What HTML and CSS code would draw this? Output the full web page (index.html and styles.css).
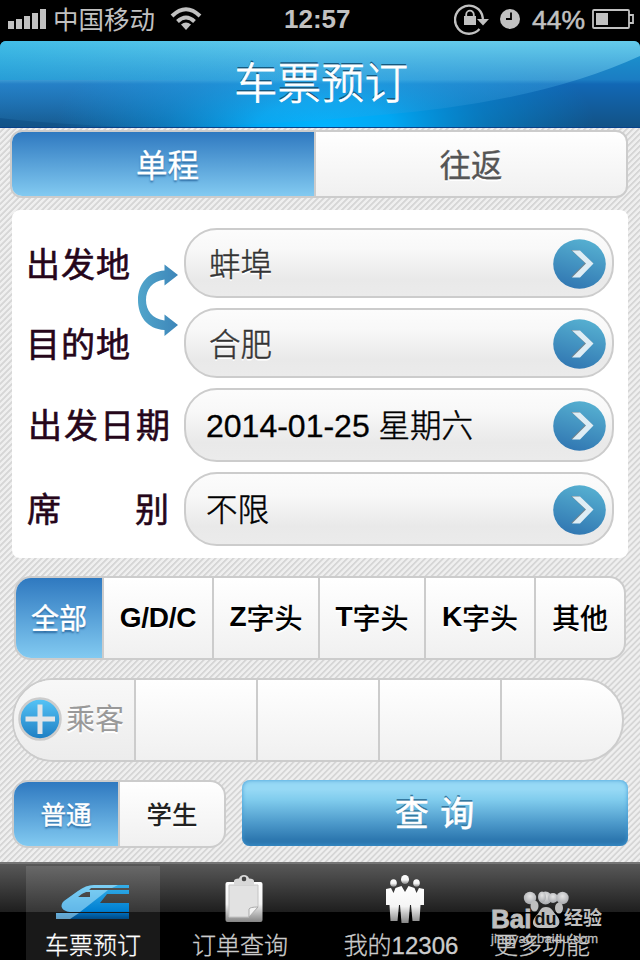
FILE: index.html
```html
<!DOCTYPE html>
<html lang="zh-CN">
<head>
<meta charset="utf-8">
<title>车票预订</title>
<link rel="stylesheet" href="styles.css">
</head>
<body>
<svg class="defs" width="0" height="0" aria-hidden="true">
  <defs>
    <linearGradient id="disc" x1="0.65" y1="0" x2="0.35" y2="1"><stop offset="0" stop-color="#56b0d1"/><stop offset="1" stop-color="#3177b2"/></linearGradient>
    <linearGradient id="swapg" x1="0" y1="0" x2="1" y2="0"><stop offset="0" stop-color="#51a5cb"/><stop offset="1" stop-color="#3d86b9"/></linearGradient>
    <linearGradient id="plusg" x1="0" y1="0" x2="0" y2="1"><stop offset="0" stop-color="#57c5f7"/><stop offset="1" stop-color="#1c7dc2"/></linearGradient>
    <linearGradient id="train" x1="0" y1="0" x2="0" y2="1"><stop offset="0" stop-color="#35aee8"/><stop offset="0.75" stop-color="#0080d2"/><stop offset="0.84" stop-color="#0068b4"/><stop offset="1" stop-color="#004a84"/></linearGradient>
    <linearGradient id="silver" x1="0" y1="0" x2="0" y2="1"><stop offset="0" stop-color="#fff"/><stop offset="0.55" stop-color="#f4f4f4"/><stop offset="1" stop-color="#858585"/></linearGradient>
    <radialGradient id="dot" cx=".5" cy=".35" r=".65"><stop offset="0" stop-color="#e4e4e4"/><stop offset="1" stop-color="#a6a8ac"/></radialGradient>
    <symbol id="go" viewBox="0 0 53 50">
      <ellipse cx="26.5" cy="25" rx="26.3" ry="24.7" fill="url(#disc)"/>
      <path d="M18 11h8l14 13-14 14h-8l14-14z" fill="#70848f"/>
      <path d="M19 11.600h8l13.500 12.900-13.500 14h-8l14-14z" fill="#deedf5"/>
    </symbol>
  </defs>
</svg>
<div class="status">
  <svg class="signal" width="38" height="20" viewBox="0 0 38 20"><path d="M0 12h6v8H0zM8 10h6v10H8zM16 7h6v13h-6zM24 4h6v16h-6zM32 0h6v20h-6z" fill="#c1c1c1"/></svg>
  <span class="carrier">中国移动</span>
  <svg class="wifi" width="32" height="24" viewBox="0 0 32 24"><g fill="none" stroke="#c1c1c1" stroke-width="4"><path d="M2 9Q16-4.500 30 9"/><path d="M7.500 14.500Q16 6.500 24.500 14.500"/></g><path d="M16 23l-5-5.500q5-4 10 0z" fill="#c1c1c1"/></svg>
  <span class="clock">12:57</span>
  <span class="tray">
    <svg class="lock" width="35" height="32" viewBox="0 0 35 32"><path d="M25.500 26A14 14 0 1 1 28 11.500L29 16" fill="none" stroke="#c1c1c1" stroke-width="2.400"/><path d="M23 16h12l-6 6.500z" fill="#c1c1c1"/><path d="M10 13h12v9H10z" fill="#c1c1c1"/><path d="M12.200 14v-2.500a3.800 3.800 0 0 1 7.600 0V14" fill="none" stroke="#c1c1c1" stroke-width="1.800"/></svg>
    <svg class="alarm" width="20" height="20" viewBox="0 0 20 20"><circle cx="10" cy="10" r="10" fill="#c1c1c1"/><path d="M11 3.500V10H6" fill="none" stroke="#000" stroke-width="1.800"/></svg>
    <span class="percent">44%</span>
    <svg class="battery" width="42" height="20" viewBox="0 0 42 20"><rect x="1" y="1" width="36" height="18" rx="1" fill="none" stroke="#c1c1c1" stroke-width="1.800"/><path d="M4 4h12v12H4z" fill="#c1c1c1"/><path d="M37 6h4v8h-4" fill="none" stroke="#c1c1c1" stroke-width="1.800"/></svg>
  </span>
</div>
<header class="header">
  <svg class="shine" width="640" height="86" viewBox="0 0 640 86" preserveAspectRatio="none">
    <defs>
      <linearGradient id="base" x1="0" y1="0" x2="0" y2="1"><stop offset="0" stop-color="#1b9ad2"/><stop offset="0.45" stop-color="#1b7dc3"/><stop offset="0.5" stop-color="#1268b5"/><stop offset="1" stop-color="#125286"/></linearGradient>
      <radialGradient id="glow" gradientUnits="userSpaceOnUse" cx="0" cy="0" r="1" gradientTransform="translate(325 86) scale(270 110)"><stop offset="0" stop-color="#00b4ff"/><stop offset="0.25" stop-color="#00acf8" stop-opacity=".95"/><stop offset="0.6" stop-color="#0096e4" stop-opacity=".5"/><stop offset="1" stop-color="#0090e0" stop-opacity="0"/></radialGradient>
      <linearGradient id="veil" x1="0" y1="0" x2="0" y2="1"><stop offset="0" stop-color="#72d4f0" stop-opacity=".85"/><stop offset="0.45" stop-color="#5fb9e4" stop-opacity=".5"/><stop offset="0.5" stop-color="#3d9fdc" stop-opacity=".45"/><stop offset="1" stop-color="#3d9fdc" stop-opacity=".1"/></linearGradient>
      <linearGradient id="side" x1="0" y1="0" x2="1" y2="0"><stop offset="0" stop-color="#00a3dd" stop-opacity=".35"/><stop offset=".5" stop-color="#00a3dd" stop-opacity="0"/></linearGradient>
    </defs>
    <path d="M0 0h640v86H0z" fill="url(#base)"/>
    <path d="M0 0h640v86H0z" fill="url(#glow)"/>
    <path d="M0 0H640V15Q540 61 380 74Q260 86 140 86Q60 84 0 77z" fill="url(#veil)"/>
    <path d="M0 0h640v39H0z" fill="url(#side)"/>
  </svg>
  <h1 class="title">车票预订</h1>
</header>
<main class="main">
  <div class="seg trip"><div class="on">单程</div><div>往返</div></div>
  <section class="card">
    <svg class="swap" width="42" height="74" viewBox="0 0 42 74"><path d="M27.500 1.500L41 12 27.500 22.500V16.500C15 18 9 27 9 37c0 10 6 19 18.500 20.500V51.500L41 62 27.500 73v-6C10 66 1 53 1 37 1 21 11 8.500 27.500 7.500z" fill="url(#swapg)"/></svg>
    <div class="row"><span class="label">出发地</span><div class="field place"><span>蚌埠</span><svg width="53" height="50"><use href="#go"/></svg></div></div>
    <div class="row"><span class="label">目的地</span><div class="field place"><span>合肥</span><svg width="53" height="50"><use href="#go"/></svg></div></div>
    <div class="row"><span class="label wide">出发日期</span><div class="field tall"><span>2014-01-25 <i>星期六</i></span><svg width="53" height="50"><use href="#go"/></svg></div></div>
    <div class="row"><span class="label split"><span>席</span><span>别</span></span><div class="field tall"><span><i>不限</i></span><svg width="53" height="50"><use href="#go"/></svg></div></div>
  </section>
  <div class="seg kinds"><div class="on">全部</div><div class="latin">G/D/C</div><div><b>Z</b>字头</div><div><b>T</b>字头</div><div><b>K</b>字头</div><div>其他</div></div>
  <div class="seg riders">
    <div class="add"><svg width="44" height="44" viewBox="0 0 44 44"><circle cx="22" cy="22" r="20.500" fill="url(#plusg)" stroke="#ccc" stroke-width="2.500"/><path d="M19.500 7.500h5v12H37v5H24.500V37h-5V24.500H7.500v-5h12z" fill="#e2e5e8"/></svg><span>乘客</span></div>
    <div></div><div></div><div></div><div></div>
  </div>
  <div class="actions">
    <div class="seg fare"><div class="on">普通</div><div>学生</div></div>
    <button class="query">查 询</button>
  </div>
</main>
<nav class="tabs">
  <div class="tab active">
    <svg width="74" height="48" viewBox="0 0 74 48"><path fill-rule="evenodd" d="M0 38h73v6H0zM73 10v3H35l-2 2h40v4H51l-7 9h29v9H14C6 36 3 31 8 26L22 16Q30 10 38 10zM22 22h12v-5h-4q-4 1-8 5z" fill="url(#train)"/><path fill-rule="evenodd" d="M62 10l-6 3H35l-2 2h19l-5 4-14 11-9 7H14C6 36 3 31 8 26L22 16Q30 10 38 10zM22 22h12v-5h-4q-4 1-8 5zM0 38h23l-9 6H0z" fill="#c4efff" opacity=".5"/></svg>
    <span>车票预订</span>
  </div>
  <div class="tab">
    <svg width="38" height="48" viewBox="0 0 38 48"><rect x=".5" y="7" width="37" height="40" rx="2" fill="url(#silver)"/><path d="M4 10h29v22l-9 10H4z" fill="#e2e2e2" stroke="#c4c4c4"/><path d="M33 32l-9 10v-8q1-2 9-2z" fill="#f4f4f4" stroke="#aaa"/><path fill-rule="evenodd" d="M9 10V6q0-2.500 5-2.500Q15 0 19 0t5 3.500q5 0 5 2.500v4zM19 1.800a2.200 2.200 0 1 0 .01 0z" fill="#d8d8d8"/><circle cx="19" cy="4" r="2.200" fill="#444"/></svg>
    <span>订单查询</span>
  </div>
  <div class="tab">
    <svg width="40" height="48" viewBox="0 0 40 48"><g fill="url(#silver)"><ellipse cx="8.500" cy="8" rx="3.300" ry="3.800"/><ellipse cx="31.500" cy="8" rx="3.300" ry="3.800"/><ellipse cx="20" cy="4.500" rx="4" ry="4.500"/></g><path d="M1 14l5-1 2.500 5 2-5 6-2 3.500 6 3.500-6 6 2 2 5 2.500-5 5 1v16h-3.500l-1 16h-7l-1.500-16h-1l-1.500 18h-7L15 30h-1l-1.500 16h-7L4.500 30H1z" fill="url(#silver)"/></svg>
    <span>我的12306</span>
  </div>
  <div class="tab more"><span>更多功能</span></div>
  <div class="mark">
    <svg class="paw" width="46" height="38" viewBox="0 0 46 38"><g fill="url(#dot)"><circle cx="7" cy="7" r="6.200"/><circle cx="22.500" cy="7" r="6.500"/><circle cx="30" cy="7" r="5"/><circle cx="39.500" cy="7" r="6.200"/><ellipse cx="19" cy="6" rx="4" ry="5.500"/></g><g fill="#bebebe"><ellipse cx="11.500" cy="15" rx="4" ry="5.500"/><ellipse cx="36" cy="17" rx="4" ry="5.500"/><path d="M23 16c6 0 7 5 11 9 5 6 2 12-5 12H17c-8 0-9-7-4-12 4-4 4-9 10-9z"/></g></svg>
    <div class="brand"><b class="bai">Bai</b><b class="du">du</b><b class="exp">经验</b></div>
    <div class="site">jingyan.baidu.com</div>
  </div>
</nav>
</body>
</html>
```
FILE: styles.css
```css
* { box-sizing: border-box; }
body {
  margin: 0; width: 640px; height: 960px; overflow: hidden;
  display: flex; flex-direction: column; background: #000;
  font-family: "Liberation Sans", "Noto Sans CJK SC", sans-serif;
}
i { font-style: normal; }
.defs { position: absolute; }
svg { display: block; flex: none; }

.status { height: 41px; display: grid; grid-template-columns: 38px 102px 32px 1fr auto; align-items: center; padding: 0 6px 2px 8px; color: #c1c1c1; flex: none; }
.signal { margin-top: -1px; }
.carrier { font-size: 25.500px; line-height: 36px; padding-left: 7px; white-space: nowrap; }
.wifi { margin-left: 22px; margin-top: -2px; }
.clock { font-size: 26px; font-weight: bold; padding-left: 104px; }
.tray { display: flex; align-items: center; }
.lock { margin-top: -2px; }
.alarm { margin: -1px 0 0 11px; }
.percent { font-size: 26.500px; margin: 1px 7px 0 12px; -webkit-text-stroke: .5px #c1c1c1; }
.battery { margin-top: -1px; }

.header { height: 87px; flex: none; position: relative; border-bottom: 1px solid #08418a; border-radius: 6px 6px 0 0; overflow: hidden; display: flex; justify-content: center; }
.shine { position: absolute; left: 0; top: 0; }
.title { position: relative; margin: 0; font-size: 43.500px; line-height: 86px; font-weight: 300; color: #fff; -webkit-text-stroke: .8px #fff; text-shadow: 0 -2px 0 #15597f; padding-left: 2px; }

.main {
  height: 734px; flex: none; padding: 2px 12px 0 10px;
  background: repeating-linear-gradient(135deg, #efefef 0 1.700px, #d6d6d6 2.400px 3.500px, #efefef 4.240px);
}
.seg { display: grid; border: 2px solid #ccc; background: linear-gradient(#fff, #f0f0f0); overflow: hidden; }
.seg > div { display: flex; align-items: center; justify-content: center; border-left: 2px solid #ccc; text-shadow: 0 2px 0 #fff; white-space: nowrap; padding-bottom: 3px; }
.seg > div:first-child { border-left: 0; }
.seg > .on { background: linear-gradient(#2f79c0, #82caf1); color: #fff; text-shadow: 0 2px 2px #2b69a0; }
.trip { height: 68px; grid-template-columns: 302px 1fr; border-radius: 12px; font-size: 31.500px; font-weight: 400; color: #555; -webkit-text-stroke: .3px; }
.trip .on { padding-left: 9px; }

.card { position: relative; margin: 12px 0 0 2px; height: 348px; padding: 18px 14px 0; background: #fff; border-radius: 8px; }
.swap { position: absolute; left: 125px; top: 53px; }
.row { display: flex; align-items: center; justify-content: space-between; margin-bottom: 10px; }
.label { font-size: 34px; letter-spacing: 1px; color: #26061a; font-weight: 400; -webkit-text-stroke: .6px #26061a; line-height: 48px; margin-top: 3px; }
.row:first-child .label { margin-left: -1px; }
.wide { padding-left: 2px; letter-spacing: 2px; margin-top: 1px; }
.split { width: 144px; padding-left: 1px; display: flex; justify-content: space-between; margin-top: 1px; }
.field { width: 430px; height: 70px; border: 2px solid #ccc; border-radius: 33px; padding: 2px 6px 0 23px; display: flex; align-items: center; justify-content: space-between; font-size: 31.500px; color: #333; background: linear-gradient(#fcfcfc, #f8f8f8 30%, #e9e9e9 75%, #ebebeb); text-shadow: 0 2px 0 #fff; font-weight: 300; white-space: nowrap; }
.field span { padding-bottom: 4px; -webkit-text-stroke: .45px; }
.tall { height: 74px; color: #000; padding-left: 20px; text-shadow: none; }
.tall span { padding-bottom: 6px; -webkit-text-stroke: .3px; font-size: 32px; }
.tall i { font-size: 31.500px; -webkit-text-stroke: .5px; }

.kinds { margin: 18px 2px 0 4px; height: 84px; grid-template-columns: 86px 110px 106px 106px 110px 1fr; border-radius: 17px; font-size: 28px; font-weight: 500; color: #000; }
.kinds .latin { font-weight: bold; letter-spacing: -.3px; padding-bottom: 0; }
.kinds .on { font-weight: 400; -webkit-text-stroke: .4px; }
.riders { margin: 18px 4px 0 2px; height: 84px; grid-template-columns: 120px repeat(4, 122px); border-radius: 41px; }
.riders .add { gap: 4px; background: linear-gradient(#f8f8f8, #ececec); color: #999; font-size: 29px; justify-content: flex-start; padding: 0 0 3px 4px; }
.riders .add span { margin-top: -3px; }
.actions { display: flex; justify-content: space-between; margin: 18px 0 0 2px; }
.fare { width: 214px; height: 68px; grid-template-columns: 104px 1fr; border-radius: 16px; font-size: 25.500px; font-weight: 500; color: #222; }
.fare .on { font-weight: 400; -webkit-text-stroke: .4px; }
.query { width: 386px; height: 66px; border: 0; padding: 0 0 3px; border-radius: 8px; color: #fff; font: 400 34px "Liberation Sans", "Noto Sans CJK SC", sans-serif; -webkit-text-stroke: .6px #fff; letter-spacing: 1px; background: linear-gradient(#97d9f5 14%, #80cced 30%, #4d9acb 65%, #2d78b0 90%); box-shadow: inset 0 0 4px #3f98d4; text-shadow: 0 -2px 0 #35799f; }

.tabs { position: relative; height: 98px; flex: none; display: grid; grid-template-columns: 187px 114px 208px 131px; border-top: 2px solid #767676; background: linear-gradient(#585858, #1e1e1e 48px, #000 48px); }
.tab { display: flex; flex-direction: column; align-items: center; padding-top: 11px; color: #ccc; font-size: 24px; font-weight: 300; line-height: 36px; white-space: nowrap; -webkit-text-stroke: .3px; }
.tab > span { margin: 5px 8px 0 0; }
.active { width: 134px; margin: 2px 0 0 26px; padding-top: 9px; color: #fff; background: linear-gradient(#686868, #363636 46px, #191919 46px); }
.active > span { margin-right: 0; }
.more { align-items: flex-start; padding-top: 59px; }
.more > span { margin-left: -15px; }

.mark { position: absolute; left: 491px; top: 27px; width: 120px; height: 56px; color: #bebebe; }
.paw { position: absolute; left: 32px; top: 0; }
.brand { display: flex; align-items: center; height: 26px; margin-top: 15px; }
.brand b { position: relative; line-height: 26px; }
.brand .bai { width: 39px; font-size: 26px; -webkit-text-stroke: .8px; }
.brand .du { width: 31px; text-align: center; color: #111; font-size: 18px; }
.brand .exp { font-size: 19px; margin-left: 3px; }
.site { font-size: 13px; margin-top: -1px; line-height: 16px; letter-spacing: .15px; -webkit-text-stroke: .3px; }
```
